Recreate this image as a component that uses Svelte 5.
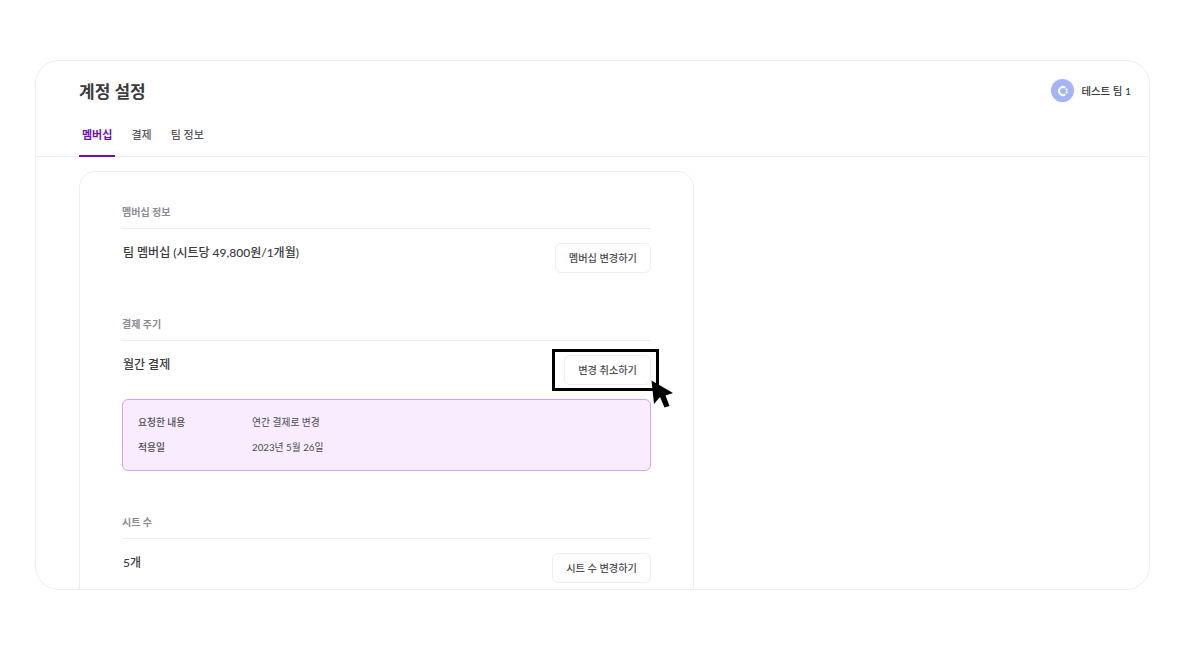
<script>
  const tabs = ["멤버십", "결제", "팀 정보"];
</script>

<div class="frame">
  <header>
    <div class="top">
      <h1>계정 설정</h1>
      <div class="team">
        <span class="avatar">
          <svg width="12" height="12" viewBox="0 0 12 12">
            <path d="M8.2 2.6A4 4 0 1 0 8.2 9.4" fill="none" stroke="#fff" stroke-width="2" />
            <circle cx="9.6" cy="4.6" r="1.1" fill="#fff" />
            <circle cx="9.6" cy="7.4" r="1.1" fill="#fff" />
          </svg>
        </span>
        <span class="team-name">테스트 팀 1</span>
      </div>
    </div>
    <nav>
      {#each tabs as tab, i}
        <div class="tab" class:active={i === 0}>{tab}</div>
      {/each}
    </nav>
  </header>

  <main>
    <div class="card">
      <section class="first">
        <h2>멤버십 정보</h2>
        <div class="row">
          <div class="value">팀 멤버십 (시트당 49,800원/1개월)</div>
          <button>멤버십 변경하기</button>
        </div>
      </section>

      <section class="cycle">
        <h2>결제 주기</h2>
        <div class="row">
          <div class="value">월간 결제</div>
          <div class="target">
            <button>변경 취소하기</button>
            <div class="focus"></div>
            <svg class="cursor" width="24" height="30" viewBox="0 0 24 30">
              <path d="M0.5 0.5 L22 13 L14.5 15.5 L18.5 26 L13.5 27.5 L9 17 L3 24 Z" fill="#000" />
            </svg>
          </div>
        </div>
        <div class="notice">
          <div class="line"><span class="label">요청한 내용</span><span>연간 결제로 변경</span></div>
          <div class="line"><span class="label">적용일</span><span>2023년 5월 26일</span></div>
        </div>
      </section>

      <section class="seats">
        <h2>시트 수</h2>
        <div class="row">
          <div class="value">5개</div>
          <button>시트 수 변경하기</button>
        </div>
      </section>
    </div>
  </main>
</div>

<style>
  :global(body) {
    margin: 0;
    background: #fff;
    font-family: Lato, "Noto Sans CJK KR", sans-serif;
    color: #3a3a3f;
  }
  .frame {
    box-sizing: border-box;
    width: 1115px;
    height: 530px;
    margin: 60px 0 0 35px;
    border: 1px solid #eeeef0;
    border-radius: 24px;
    overflow: hidden;
  }
  .top {
    display: flex;
    justify-content: space-between;
    align-items: center;
    height: 60px;
    padding: 0 18px 0 43px;
  }
  h1 {
    margin: 1px 0 0;
    font-size: 17px;
    line-height: 26px;
    font-weight: 700;
    color: #3a3a3f;
  }
  .team {
    display: flex;
    align-items: center;
    gap: 7px;
    font-size: 10.4px;
    font-weight: 500;
    margin-bottom: 1px;
  }
  .avatar {
    display: flex;
    align-items: center;
    justify-content: center;
    width: 23px;
    height: 23px;
    border-radius: 50%;
    background: #a5b4f5;
  }
  nav {
    display: flex;
    gap: 13px;
    height: 35px;
    padding-left: 43px;
    border-bottom: 1px solid #eeeef0;
  }
  .tab {
    box-sizing: border-box;
    height: 36px;
    padding: 5px 3px 0;
    font-size: 11px;
    line-height: 17px;
    font-weight: 500;
    color: #5a5a60;
  }
  .tab.active {
    font-weight: 700;
    color: #6f0fb5;
    border-bottom: 2px solid #6f0fb5;
  }
  main {
    padding: 14px 0 0 43px;
  }
  .card {
    box-sizing: border-box;
    width: 615px;
    height: 500px;
    padding: 0 42px;
    border: 1px solid #eeeef0;
    border-radius: 16px;
  }
  section.first {
    padding-top: 32px;
  }
  section.cycle {
    padding-top: 43px;
  }
  section.seats {
    padding-top: 43px;
  }
  h2 {
    margin: 0;
    height: 24px;
    font-size: 10px;
    line-height: 17px;
    font-weight: 700;
    color: #8b8b92;
    border-bottom: 1px solid #eeeef0;
  }
  .row {
    display: flex;
    justify-content: space-between;
    align-items: flex-start;
    padding-top: 14px;
    height: 30px;
  }
  .value {
    padding-left: 1px;
    font-size: 12px;
    line-height: 20px;
    font-weight: 500;
    color: #3a3a3f;
  }
  button {
    box-sizing: border-box;
    height: 30px;
    padding: 0 13px 2px;
    background: #fff;
    border: 1px solid #eeeef0;
    border-radius: 6px;
    font-family: inherit;
    font-size: 10.2px;
    font-weight: 500;
    color: #4a4a50;
  }
  .target {
    position: relative;
  }
  .focus {
    position: absolute;
    inset: -6px -8px -6px -12px;
    border: 3px solid #000;
  }
  .cursor {
    position: absolute;
    left: 87px;
    top: 25px;
  }
  .notice {
    box-sizing: border-box;
    height: 72px;
    margin-top: 14px;
    padding: 12px 15px;
    background: #f9ecff;
    border: 1px solid #d2a6e8;
    border-radius: 6px;
    font-size: 9.75px;
    color: #4a4a50;
  }
  .line {
    display: flex;
    height: 25px;
    line-height: 20px;
  }
  .label {
    width: 114px;
    font-weight: 500;
  }
</style>
